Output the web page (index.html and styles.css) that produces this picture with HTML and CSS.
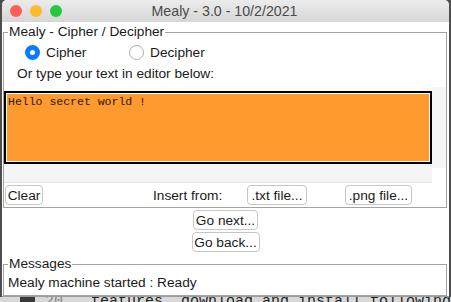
FILE: index.html
```html
<!DOCTYPE html>
<html lang="en">
<head>
  <meta charset="UTF-8" />
  <title>Mealy - 3.0 - 10/2/2021</title>
  <link rel="stylesheet" href="styles.css">
</head>
<body>

  <div class="window">
    <div class="titlebar">
      <div class="lights">
        <span class="light red"></span>
        <span class="light yellow"></span>
        <span class="light green"></span>
      </div>
      <div class="title">Mealy - 3.0 - 10/2/2021</div>
    </div>

    <fieldset class="group main">
      <legend>Mealy - Cipher / Decipher</legend>

      <div class="modes">
        <label class="mode"><span class="radio checked"></span>Cipher</label>
        <label class="mode"><span class="radio"></span>Decipher</label>
      </div>

      <div class="hint">Or type your text in editor below:</div>

      <div class="editor">
        <div class="editor-main">
          <div class="textbox">Hello secret world !</div>
          <div class="hscroll"></div>
        </div>
        <div class="vscroll"></div>
      </div>

      <div class="actions">
        <div class="cell"><button class="btn clear">Clear</button></div>
        <div class="cell label">Insert from:</div>
        <div class="cell"><button class="btn txt">.txt file...</button></div>
        <div class="cell"><button class="btn png">.png file...</button></div>
      </div>
    </fieldset>

    <div class="nav">
      <button class="btn next">Go next...</button>
      <button class="btn back">Go back...</button>
    </div>

    <fieldset class="group messages">
      <legend>Messages</legend>
      <div class="message">Mealy machine started : Ready</div>
    </fieldset>
  </div>

  <div class="desk">
    <span class="gutter"></span>
    <span class="lineno">20</span>
    <span class="code">features, download and install following</span>
  </div>

</body>
</html>
```

FILE: styles.css
```css
body {
  margin: 0;
  width: 451px;
  height: 302px;
  overflow: hidden;
  background-color: #4e4e4e;
  font-family: 'Liberation Sans', Arial, sans-serif;
  font-size: 13.7px;
  color: #1a1a1a;
}

.window {
  margin: 0 2px;
  width: 447px;
  height: 297px;
  background-color: #fff;
  border-radius: 5px 5px 0 0;
  overflow: hidden;
  display: flex;
  flex-direction: column;
  box-sizing: border-box;
  border-bottom: 1px solid #9c9c9c;
}

.titlebar {
  height: 22px;
  flex-shrink: 0;
  background: linear-gradient(#ececec, #d6d6d6);
  position: relative;
  display: flex;
  align-items: center;
  justify-content: center;
}

.lights {
  position: absolute;
  left: 8px;
  top: 5px;
  display: flex;
  gap: 8px;
}

.light {
  width: 12px;
  height: 12px;
  border-radius: 50%;
}

.red { background-color: #fd5f57; }
.yellow { background-color: #fdbb2e; }
.green { background-color: #27c840; }

.title {
  color: #4b4b4b;
  font-size: 14.2px;
  margin-left: -2px;
}

.group {
  margin: 0 2px 0 1px;
  padding: 0;
  border: 1px solid #a3a3a3;
  min-width: 0;
}

.group legend {
  margin-left: 4px;
  padding: 0 1px;
  font-size: 13.7px;
  line-height: 16px;
}

.main {
  margin-top: 2px;
}

.modes {
  display: flex;
  padding: 4px 0 0 21px;
  height: 16px;
}

.mode {
  display: flex;
  align-items: center;
  gap: 6px;
  width: 104px;
}

.radio {
  width: 15px;
  height: 15px;
  box-sizing: border-box;
  border-radius: 50%;
  border: 1px solid #adadad;
  background-color: #fff;
}

.radio.checked {
  border: 5px solid #0a7bff;
  background-color: #fff;
}

.hint {
  margin-top: 6px;
  padding-left: 13px;
  line-height: 16px;
}

.editor {
  display: flex;
  align-items: flex-start;
  margin-top: 5px;
}

.editor-main {
  width: 428px;
  margin-top: 4px;
  background-color: #f5f5f5;
}

.textbox {
  height: 73px;
  box-sizing: border-box;
  border: 2px solid #000;
  box-shadow: inset 0 0 0 1px #fff;
  background-color: #ff9a2e;
  padding: 1px 0 0 2px;
  font-family: 'Liberation Mono', monospace;
  font-size: 11.5px;
  line-height: 16px;
  color: #2a1a08;
}

.hscroll {
  height: 18px;
  border-bottom: 1px solid #e4e4e4;
}

.vscroll {
  width: 14px;
  height: 81px;
  background-color: #f6f6f6;
}

.actions {
  display: grid;
  grid-template-columns: 149px 94px 98px auto;
  align-items: center;
  padding: 2px 0 2px;
}

.btn {
  height: 20px;
  padding: 0;
  font-family: 'Liberation Sans', Arial, sans-serif;
  font-size: 13.7px;
  color: #1a1a1a;
  background-color: #fff;
  border: 1px solid #c6c6c6;
  border-radius: 4px;
}

.clear { width: 38px; margin-left: 1px; }
.txt { width: 60px; }
.png { width: 67px; }
.next { width: 65px; }
.back { width: 68px; }

.nav {
  display: flex;
  flex-direction: column;
  align-items: center;
  gap: 2px;
  padding-top: 2px;
  margin-bottom: 4px;
}

.messages {
  flex: 1;
}

.message {
  padding: 3px 0 0 4px;
  line-height: 16px;
}

.desk {
  height: 5px;
  background-color: #d8d8d8;
  display: flex;
  align-items: flex-start;
  overflow: hidden;
  font-family: 'Liberation Mono', monospace;
  font-size: 15px;
  line-height: 9px;
}

.gutter {
  width: 27px;
  height: 5px;
  margin-left: 20px;
  background-color: #3a3a3a;
}

.lineno {
  margin-left: 10px;
  width: 83px;
  color: #888;
}

.code {
  white-space: nowrap;
  color: #222;
}
```
